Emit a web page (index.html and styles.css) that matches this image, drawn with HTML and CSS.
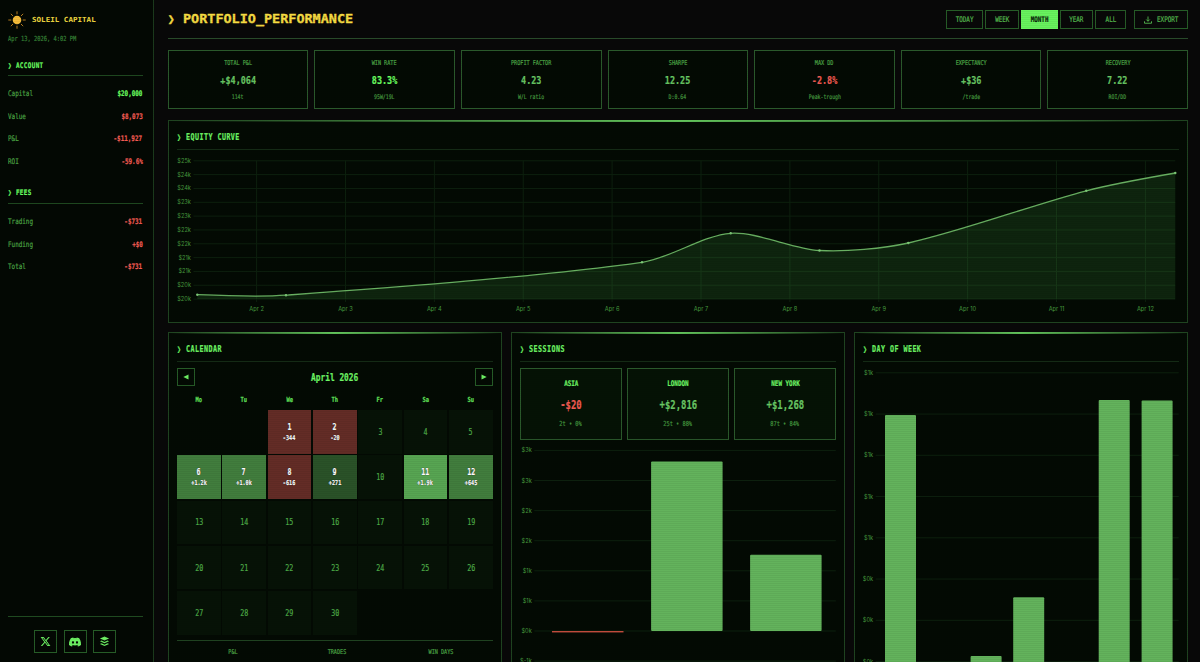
FILE: index.html
```html
<!DOCTYPE html>
<html lang="en">

<head>
  <meta charset="utf-8">
  <title>Soleil Capital</title>
  <link rel="stylesheet" href="styles.css">
</head>

<body>
  <aside class="sidebar">
    <div class="brand">
      <svg class="sun" viewBox="0 0 18 18">
        <g stroke="#c98a25" stroke-width="0.9" stroke-linecap="round">
          <path d="M9 .7v2.2M9 15.1v2.2M.7 9h2.2M15.1 9h2.2M3.1 3.1l1.7 1.7M13.2 13.2l1.7 1.7M3.1 14.9l1.7-1.7M13.2 4.8l1.7-1.7" />
        </g>
        <circle cx="9" cy="9" r="4.3" fill="#f5bc3a" />
      </svg>
      <span class="brand-name">SOLEIL CAPITAL</span>
    </div>
    <div class="date"><span class="txt left">Apr 13, 2026, 4:02 PM</span></div>

    <h2 class="side-title"><span class="txt left">❯ ACCOUNT</span></h2>
    <div class="row"><span class="txt left">Capital</span><b class="txt right bright">$20,000</b></div>
    <div class="row"><span class="txt left">Value</span><b class="txt right neg">$8,073</b></div>
    <div class="row"><span class="txt left">P&amp;L</span><b class="txt right neg">-$11,927</b></div>
    <div class="row"><span class="txt left">ROI</span><b class="txt right neg">-59.6%</b></div>

    <h2 class="side-title fees"><span class="txt left">❯ FEES</span></h2>
    <div class="row"><span class="txt left">Trading</span><b class="txt right neg">-$731</b></div>
    <div class="row"><span class="txt left">Funding</span><b class="txt right neg">+$0</b></div>
    <div class="row"><span class="txt left">Total</span><b class="txt right neg">-$731</b></div>

    <div class="social">
      <a class="social-link"><svg viewBox="0 0 24 24"><path d="M18.244 2.25h3.308l-7.227 8.26 8.502 11.24H16.17l-5.214-6.817L4.99 21.75H1.68l7.73-8.835L1.254 2.25H8.08l4.713 6.231zm-1.161 17.52h1.833L7.084 4.126H5.117z" /></svg></a>
      <a class="social-link"><svg class="discord" viewBox="0 0 24 24"><path d="M20.3 4.4A19.8 19.8 0 0 0 15.4 3l-.6 1.3a18.3 18.3 0 0 0-5.5 0L8.6 3a19.7 19.7 0 0 0-4.9 1.4C.5 9-.3 13.6.1 18.1a19.9 19.9 0 0 0 6 3l1.3-2.1-1.9-.9.4-.4a14.2 14.2 0 0 0 12.2 0l.4.4-1.9.9 1.3 2.1a19.8 19.8 0 0 0 6-3c.5-5.2-.8-9.7-3.6-13.7zM8 15.3c-1.2 0-2.2-1.1-2.2-2.4s1-2.4 2.2-2.4 2.2 1.1 2.2 2.4-1 2.4-2.2 2.4zm8 0c-1.2 0-2.2-1.1-2.2-2.4s1-2.4 2.2-2.4 2.2 1.1 2.2 2.4-1 2.4-2.2 2.4z" /></svg></a>
      <a class="social-link"><svg viewBox="0 0 24 24"><path d="M12 1l10 4.5-10 4.5-10-4.5zM2 11.5l3.5-1.5 6.5 3 6.5-3 3.5 1.5-10 4.5zM2 17.5l3.5-1.5 6.5 3 6.5-3 3.5 1.5-10 4.5z" /></svg></a>
    </div>
  </aside>

  <main class="main">
    <header class="header">
      <h1 class="title"><span class="chev">❯</span><span class="title-text">PORTFOLIO_PERFORMANCE</span></h1>
      <nav class="periods">
        <button class="btn today"><span class="txt">TODAY</span></button>
        <button class="btn week"><span class="txt">WEEK</span></button>
        <button class="btn month active"><span class="txt">MONTH</span></button>
        <button class="btn year"><span class="txt">YEAR</span></button>
        <button class="btn all"><span class="txt">ALL</span></button>
        <button class="btn export">
          <svg viewBox="0 0 16 16"><path d="M8 1v9.5M4.5 7L8 10.5 11.5 7M1 10.5V14.5h14v-4" /></svg>
          <span class="txt left">EXPORT</span>
        </button>
      </nav>
    </header>

    <section class="stats">
      <div class="stat"><span class="txt label">TOTAL P&amp;L</span><b class="txt value">+$4,064</b><span class="txt sub">114t</span></div>
      <div class="stat"><span class="txt label">WIN RATE</span><b class="txt value bright">83.3%</b><span class="txt sub">95W/19L</span></div>
      <div class="stat"><span class="txt label">PROFIT FACTOR</span><b class="txt value">4.23</b><span class="txt sub">W/L ratio</span></div>
      <div class="stat"><span class="txt label">SHARPE</span><b class="txt value">12.25</b><span class="txt sub">D:0.64</span></div>
      <div class="stat"><span class="txt label">MAX DD</span><b class="txt value neg">-2.8%</b><span class="txt sub">Peak-trough</span></div>
      <div class="stat"><span class="txt label">EXPECTANCY</span><b class="txt value">+$36</b><span class="txt sub">/trade</span></div>
      <div class="stat"><span class="txt label">RECOVERY</span><b class="txt value">7.22</b><span class="txt sub">ROI/DD</span></div>
    </section>

    <section class="panel equity">
      <h2 class="panel-title"><span class="txt left">❯ EQUITY CURVE</span></h2>
      <svg id="equity" class="chart" width="1002" height="172" viewBox="177 150 1002 172">
        <g class="grid"></g>
        <path class="area" d="M197.3 294.7C197.3 294.7 259.4 297.1 286 295.2C392.9 287.4 536.2 277 642 262.3C669.6 258.5 703.7 235.1 730.7 233.3C757 231.6 792.6 249 819.5 250.5C846 251.9 882.3 248.8 908.3 243C962.4 230.9 1032.5 204.9 1086.3 190.8C1112.6 183.9 1175.3 173 1175.3 173V299H197.3Z" />
        <path class="line" d="M197.3 294.7C197.3 294.7 259.4 297.1 286 295.2C392.9 287.4 536.2 277 642 262.3C669.6 258.5 703.7 235.1 730.7 233.3C757 231.6 792.6 249 819.5 250.5C846 251.9 882.3 248.8 908.3 243C962.4 230.9 1032.5 204.9 1086.3 190.8C1112.6 183.9 1175.3 173 1175.3 173" />
        <g class="dots">
          <circle cx="197.3" cy="294.7" r="1.2" />
          <circle cx="286" cy="295.2" r="1.2" />
          <circle cx="642" cy="262.3" r="1.2" />
          <circle cx="730.7" cy="233.3" r="1.2" />
          <circle cx="819.5" cy="250.5" r="1.2" />
          <circle cx="908.3" cy="243" r="1.2" />
          <circle cx="1086.3" cy="190.8" r="1.2" />
          <circle cx="1175.3" cy="173" r="1.2" />
        </g>
      </svg>
    </section>

    <section class="panels">
      <div class="panel">
        <h2 class="panel-title"><span class="txt left">❯ CALENDAR</span></h2>
        <div class="cal-nav">
          <button class="arrow"><svg viewBox="0 0 6 6"><path d="M5.5 .5v5L.3 3z" /></svg></button>
          <b class="txt cal-month">April 2026</b>
          <button class="arrow"><svg viewBox="0 0 6 6"><path d="M.5 .5v5L5.7 3z" /></svg></button>
        </div>
        <div class="cal-head">
          <b class="txt">Mo</b><b class="txt">Tu</b><b class="txt">We</b><b class="txt">Th</b><b class="txt">Fr</b><b class="txt">Sa</b><b class="txt">Su</b>
        </div>
        <div class="cal-grid">
          <div></div>
          <div></div>
          <div class="day loss"><b class="txt">1</b><b class="txt pnl">-344</b></div>
          <div class="day loss"><b class="txt">2</b><b class="txt pnl">-20</b></div>
          <div class="day"><span class="txt">3</span></div>
          <div class="day"><span class="txt">4</span></div>
          <div class="day"><span class="txt">5</span></div>
          <div class="day win2"><b class="txt">6</b><b class="txt pnl">+1.2k</b></div>
          <div class="day win2"><b class="txt">7</b><b class="txt pnl">+1.0k</b></div>
          <div class="day loss"><b class="txt">8</b><b class="txt pnl">-616</b></div>
          <div class="day win1"><b class="txt">9</b><b class="txt pnl">+271</b></div>
          <div class="day"><span class="txt">10</span></div>
          <div class="day win3"><b class="txt">11</b><b class="txt pnl">+1.9k</b></div>
          <div class="day win2"><b class="txt">12</b><b class="txt pnl">+645</b></div>
          <div class="day"><span class="txt">13</span></div>
          <div class="day"><span class="txt">14</span></div>
          <div class="day"><span class="txt">15</span></div>
          <div class="day"><span class="txt">16</span></div>
          <div class="day"><span class="txt">17</span></div>
          <div class="day"><span class="txt">18</span></div>
          <div class="day"><span class="txt">19</span></div>
          <div class="day"><span class="txt">20</span></div>
          <div class="day"><span class="txt">21</span></div>
          <div class="day"><span class="txt">22</span></div>
          <div class="day"><span class="txt">23</span></div>
          <div class="day"><span class="txt">24</span></div>
          <div class="day"><span class="txt">25</span></div>
          <div class="day"><span class="txt">26</span></div>
          <div class="day"><span class="txt">27</span></div>
          <div class="day"><span class="txt">28</span></div>
          <div class="day"><span class="txt">29</span></div>
          <div class="day"><span class="txt">30</span></div>
        </div>
        <div class="cal-foot"><span class="txt">P&amp;L</span><span class="txt">TRADES</span><span class="txt">WIN DAYS</span></div>
      </div>

      <div class="panel">
        <h2 class="panel-title"><span class="txt left">❯ SESSIONS</span></h2>
        <div class="sessions">
          <div class="session"><b class="txt name">ASIA</b><b class="txt value neg">-$20</b><span class="txt sub">2t • 0%</span></div>
          <div class="session"><b class="txt name">LONDON</b><b class="txt value">+$2,816</b><span class="txt sub">25t • 88%</span></div>
          <div class="session"><b class="txt name">NEW YORK</b><b class="txt value">+$1,268</b><span class="txt sub">87t • 84%</span></div>
        </div>
        <svg id="sessions" class="chart" width="316" height="222" viewBox="520.2 440 316 222"><g class="grid"></g><g class="bars"></g></svg>
      </div>

      <div class="panel">
        <h2 class="panel-title"><span class="txt left">❯ DAY OF WEEK</span></h2>
        <svg id="weekdays" class="chart" width="316" height="300" viewBox="863.3 362 316 300"><g class="grid"></g><g class="bars"></g></svg>
      </div>
    </section>
  </main>

  <div class="scanlines"></div>
  <script src="charts.js"></script>
</body>

</html>
```
FILE: styles.css
```css
* {
  box-sizing: border-box;
}

body {
  background: #080808;
  color: #4ba544;
  display: flex;
  font-family: "DejaVu Sans Mono", monospace;
  height: 662px;
  margin: 0;
  overflow: hidden;
  position: relative;
}

h1,
h2 {
  margin: 0;
}

button {
  background: transparent;
  border: 1px solid #265c27;
  color: inherit;
  font-family: inherit;
  padding: 0;
}

/* condensed terminal lettering */
.txt {
  -webkit-text-stroke: 0.2px;
  display: inline-block;
  transform: scaleX(0.77);
  white-space: nowrap;
}

.left {
  transform-origin: left;
}

.right {
  transform-origin: right;
}

.bright {
  color: #6cff62 !important;
}

.neg {
  color: #f25c54 !important;
}

/* sidebar */
.sidebar {
  background: #030803;
  border-right: 1px solid #1b3a1c;
  display: flex;
  flex-direction: column;
  flex: none;
  font-size: 7.7px;
  padding: 10px 10.5px 9px 8px;
  width: 154px;
}

.brand {
  align-items: center;
  display: flex;
  gap: 6px;
  height: 19px;
}

.sun {
  height: 18px;
  width: 18px;
}

.brand-name {
  color: #f2da40;
  font-size: 7px;
  font-weight: bold;
  transform: scaleX(1.08);
  transform-origin: left;
  white-space: nowrap;
}

.date {
  color: #368236;
  font-size: 7px;
  line-height: 21px;
}

.side-title {
  border-bottom: 1px solid #1f4a20;
  color: #6cff62;
  font-size: 7.7px;
  height: 26px;
  letter-spacing: 0.5px;
  line-height: 31px;
  margin-bottom: 7px;
}

.fees {
  height: 25px;
  line-height: 28px;
  margin-top: 6px;
}

.row {
  display: flex;
  height: 22.5px;
  justify-content: space-between;
  line-height: 22.5px;
}

.social {
  border-top: 1px solid #1f4a20;
  display: flex;
  gap: 6.5px;
  justify-content: center;
  margin-top: auto;
  padding-top: 13px;
}

.social-link {
  border: 1px solid #265c27;
  display: grid;
  height: 23px;
  place-items: center;
  width: 23px;
}

.social-link svg {
  fill: #6df063;
  height: 11px;
  width: 11px;
}

.social-link .discord {
  height: 12px;
  width: 12px;
}

/* main column */
.main {
  flex: none;
  margin-left: 13.7px;
  width: 1020.3px;
}

.header {
  align-items: center;
  border-bottom: 1px solid #284a29;
  display: flex;
  height: 39px;
  justify-content: space-between;
}

.title {
  align-items: center;
  color: #f5dc42;
  display: flex;
  font-size: 11.5px;
}

.chev {
  -webkit-text-stroke: 0.4px;
  font-size: 11.5px;
  width: 15.5px;
}

.title-text {
  -webkit-text-stroke: 0.3px;
  transform: scaleX(1.17);
  transform-origin: left;
}

.periods {
  display: flex;
  gap: 2px;
  padding-top: 1px;
}

.btn {
  align-items: center;
  color: #57bd50;
  display: flex;
  font-size: 7.7px;
  height: 19px;
  justify-content: center;
}

.today {
  width: 37.5px;
}

.week,
.year {
  width: 33.5px;
}

.month {
  width: 37px;
}

.all {
  width: 30.5px;
}

.active {
  background: #68f35e;
  border-color: #68f35e;
  color: #0a260a;
  font-weight: bold;
}

.export {
  gap: 5px;
  justify-content: flex-start;
  margin-left: 6px;
  padding-left: 9px;
  width: 54px;
}

.export svg {
  fill: none;
  height: 8px;
  stroke: #57bd50;
  stroke-width: 1.8;
  width: 8px;
}

.stats {
  display: grid;
  gap: 6px;
  grid-template-columns: repeat(7, 1fr);
  margin-top: 11px;
}

.stat {
  align-items: center;
  background: #030a03;
  border: 1px solid #2a592b;
  display: flex;
  flex-direction: column;
  height: 59px;
  padding-top: 7px;
}

.label {
  color: #4ba345;
  font-size: 6.7px;
  line-height: 10px;
}

.value {
  color: #69c764;
  font-size: 11px;
  line-height: 25px;
}

.sub {
  color: #43973e;
  font-size: 6.3px;
  line-height: 8px;
}

/* panels */
.panel {
  background: #030a03;
  border: 1px solid #1f4320;
  padding: 0 8px;
  position: relative;
}

.panel::before {
  background: linear-gradient(90deg, transparent, #62c45b, transparent);
  content: "";
  height: 2px;
  left: 0;
  position: absolute;
  right: 0;
  top: -1px;
}

.panel-title {
  border-bottom: 1px solid #152c16;
  color: #6ef565;
  font-size: 8.7px;
  height: 29px;
  letter-spacing: 0.6px;
  line-height: 32px;
}

.equity {
  height: 203px;
  margin-top: 11px;
}

.chart {
  display: block;
}

.panels {
  display: grid;
  gap: 9.5px;
  grid-template-columns: repeat(3, minmax(0, 1fr));
  height: 400px;
  margin: 9px 0 0 0.3px;
}

.grid line {
  stroke: #0d200e;
  stroke-width: 1;
}

.grid text {
  fill: #469a3e;
  font-family: Inter, "Liberation Sans", sans-serif;
  font-size: 5.7px;
}

.area {
  fill: #4cae4c;
  fill-opacity: 0.16;
}

.line {
  fill: none;
  stroke: #68b061;
  stroke-width: 1.3;
}

.dots {
  fill: #7cc876;
}

.bars rect {
  fill: #63b35c;
}

.bars .down {
  fill: #c94f40;
}

/* calendar */
.cal-nav {
  align-items: center;
  display: flex;
  justify-content: space-between;
  margin-top: 6px;
}

.arrow {
  display: grid;
  height: 18px;
  place-items: center;
  width: 18px;
}

.arrow svg {
  fill: #6ced63;
  height: 6px;
  width: 6px;
}

.cal-month {
  color: #6ef565;
  font-size: 10.2px;
}

.cal-head {
  color: #62e25a;
  display: grid;
  font-size: 7px;
  gap: 1.8px;
  grid-template-columns: repeat(7, 1fr);
  height: 24px;
  line-height: 28px;
  text-align: center;
}

.cal-grid {
  display: grid;
  gap: 1.8px;
  grid-auto-rows: 43.5px;
  grid-template-columns: repeat(7, 1fr);
}

.day {
  align-items: center;
  background: #061206;
  color: #4dab46;
  display: flex;
  flex-direction: column;
  font-size: 8.7px;
  justify-content: center;
  line-height: 11px;
  padding-top: 1px;
}

.loss,
.win1,
.win2,
.win3 {
  color: #ffffff;
  text-shadow: 0 0 1px #000;
}

.loss {
  background: #632c26;
}

.win1 {
  background: #2a5228;
}

.win2 {
  background: #417d3d;
}

.win3 {
  background: #57a552;
}

.pnl {
  font-size: 6.7px;
  line-height: 10px;
}

.cal-foot {
  border-top: 1px solid #1f4220;
  color: #4ba345;
  display: grid;
  font-size: 6.7px;
  grid-template-columns: repeat(3, 1fr);
  line-height: 22px;
  margin-top: 5px;
  padding-left: 4px;
  text-align: center;
}

/* sessions */
.sessions {
  display: grid;
  gap: 5.5px;
  grid-template-columns: repeat(3, 1fr);
  margin-top: 6px;
}

.session {
  align-items: center;
  background: #051205;
  border: 1px solid #2a592b;
  display: flex;
  flex-direction: column;
  height: 72px;
  padding-top: 9px;
}

.name {
  color: #6ef565;
  font-size: 7.7px;
  line-height: 12px;
}

.session .value {
  font-size: 11.6px;
  line-height: 30px;
}

.session .sub {
  font-size: 6.9px;
}

.scanlines {
  background: repeating-linear-gradient(transparent 0 1px, rgba(0, 0, 0, 0.05) 1px 2px);
  inset: 0;
  pointer-events: none;
  position: absolute;
}
```
FILE: charts.js
```javascript
const NS = 'http://www.w3.org/2000/svg';

function add(parent, tag, attrs, text) {
  const el = document.createElementNS(NS, tag);
  for (const key in attrs) el.setAttribute(key, attrs[key]);
  if (text) el.textContent = text;
  parent.appendChild(el);
}

// horizontal grid lines with their labels
function yAxis(id, labels, top, step, x1, x2) {
  const grid = document.querySelector(id + ' .grid');
  labels.forEach((label, i) => {
    const y = top + i * step;
    add(grid, 'line', { x1: x1, x2: x2, y1: y, y2: y });
    add(grid, 'text', { x: x1 - 2.5, y: y + 2, 'text-anchor': 'end' }, label);
  });
}

function bars(id, width, base, items) {
  const group = document.querySelector(id + ' .bars');
  items.forEach(([x, top, down]) => {
    add(group, 'rect', {
      x: x,
      y: Math.min(top, base),
      width: width,
      height: Math.abs(base - top),
      rx: down ? 0 : 1,
      class: down ? 'down' : 'up'
    });
  });
}

yAxis('#equity', ['$25k', '$24k', '$24k', '$23k', '$23k', '$22k', '$22k', '$21k', '$21k', '$20k', '$20k'], 160.8, 13.83, 193.5, 1175.3);
const equityGrid = document.querySelector('#equity .grid');
for (let i = 0; i < 11; i++) {
  const x = 256.6 + i * 88.88;
  add(equityGrid, 'line', { x1: x, x2: x, y1: 160.5, y2: 302 });
  add(equityGrid, 'text', { x: x, y: 310.8, 'text-anchor': 'middle' }, 'Apr ' + (i + 2));
}

yAxis('#sessions', ['$3k', '$3k', '$2k', '$2k', '$1k', '$1k', '$0k', '$-1k'], 450.4, 30.1, 534.5, 836);
bars('#sessions', 71.5, 631, [[552.2, 632.4, true], [651.3, 461.5], [750.3, 554.8]]);

yAxis('#weekdays', ['$1k', '$1k', '$1k', '$1k', '$1k', '$0k', '$0k', '$0k'], 372.8, 41.25, 876, 1179);
bars('#weekdays', 31, 680, [[885.3, 415], [970.9, 656], [1013.5, 597.3], [1099, 400], [1141.9, 400.4]]);
```
